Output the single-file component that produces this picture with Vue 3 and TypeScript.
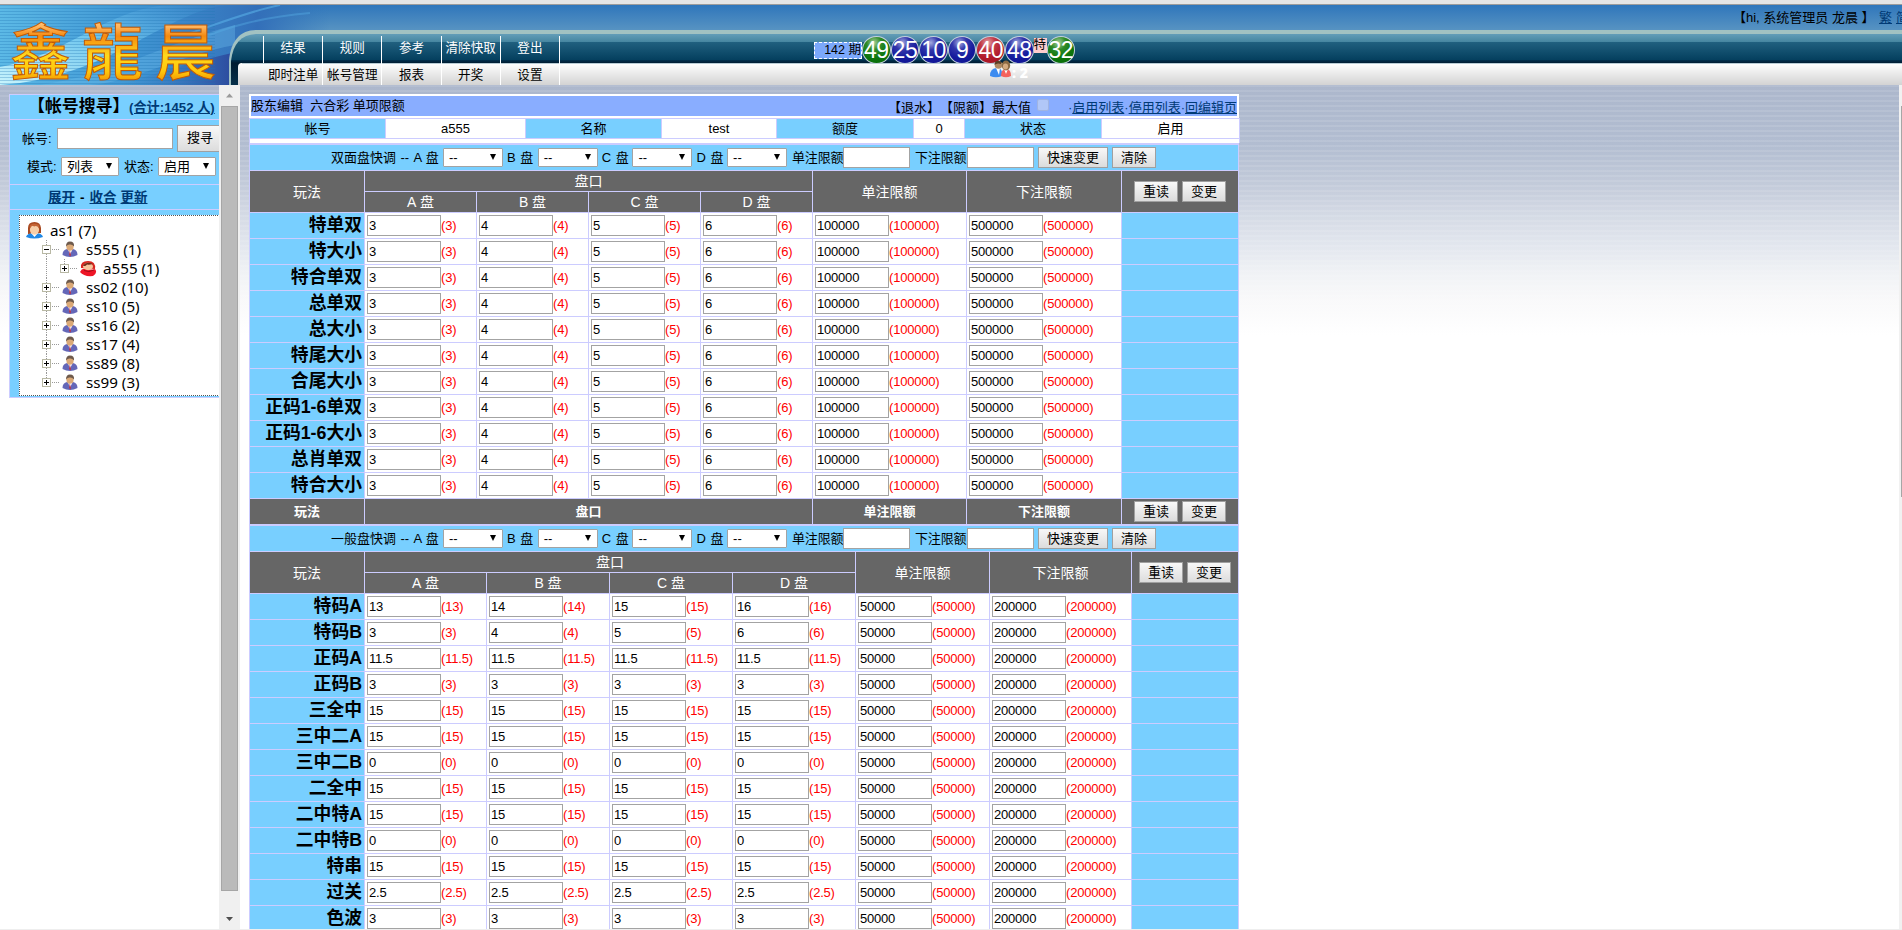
<script setup lang="ts">
interface PlayRow {
  name: string
  rates: string[]
  single: string
  total: string
}
interface PlayTable {
  key: string
  quick: string
  footer: boolean
  rows: PlayRow[]
}
interface TreeNode {
  name: string
  level: number
  icon: 'root' | 'man' | 'red'
  box: '' | 'minus' | 'plus'
}

const topMenu = ['结果', '规则', '参考', '清除快取', '登出']
const subMenu = ['即时注单', '帐号管理', '报表', '开奖', '设置']
const balls = [
  { n: '49', c: 'green' },
  { n: '25', c: 'blue' },
  { n: '10', c: 'blue' },
  { n: '9', c: 'blue' },
  { n: '40', c: 'red' },
  { n: '48', c: 'blue' },
]
const tree: TreeNode[] = [
  { name: 'as1 (7)', level: 0, icon: 'root', box: '' },
  { name: 's555 (1)', level: 1, icon: 'man', box: 'minus' },
  { name: 'a555 (1)', level: 2, icon: 'red', box: 'plus' },
  { name: 'ss02 (10)', level: 1, icon: 'man', box: 'plus' },
  { name: 'ss10 (5)', level: 1, icon: 'man', box: 'plus' },
  { name: 'ss16 (2)', level: 1, icon: 'man', box: 'plus' },
  { name: 'ss17 (4)', level: 1, icon: 'man', box: 'plus' },
  { name: 'ss89 (8)', level: 1, icon: 'man', box: 'plus' },
  { name: 'ss99 (3)', level: 1, icon: 'man', box: 'plus' },
]
const info = [
  { t: '帐号', head: true },
  { t: 'a555', head: false },
  { t: '名称', head: true },
  { t: 'test', head: false },
  { t: '额度', head: true },
  { t: '0', head: false },
  { t: '状态', head: true },
  { t: '启用', head: false },
]

const twoSided = ['特单双', '特大小', '特合单双', '总单双', '总大小', '特尾大小', '合尾大小', '正码1-6单双', '正码1-6大小', '总肖单双', '特合大小']
const general: [string, string[]][] = [
  ['特码A', ['13', '14', '15', '16']],
  ['特码B', ['3', '4', '5', '6']],
  ['正码A', ['11.5', '11.5', '11.5', '11.5']],
  ['正码B', ['3', '3', '3', '3']],
  ['三全中', ['15', '15', '15', '15']],
  ['三中二A', ['15', '15', '15', '15']],
  ['三中二B', ['0', '0', '0', '0']],
  ['二全中', ['15', '15', '15', '15']],
  ['二中特A', ['15', '15', '15', '15']],
  ['二中特B', ['0', '0', '0', '0']],
  ['特串', ['15', '15', '15', '15']],
  ['过关', ['2.5', '2.5', '2.5', '2.5']],
  ['色波', ['3', '3', '3', '3']],
]
const tables: PlayTable[] = [
  {
    key: 'sided',
    quick: '双面盘快调',
    footer: true,
    rows: twoSided.map((name) => ({ name, rates: ['3', '4', '5', '6'], single: '100000', total: '500000' })),
  },
  {
    key: 'general',
    quick: '一般盘快调',
    footer: false,
    rows: general.map(([name, rates]) => ({ name, rates, single: '50000', total: '200000' })),
  },
]
const plates = ['A', 'B', 'C', 'D']
const values = (r: PlayRow): string[] => [...r.rates, r.single, r.total]
</script>

<template>
  <div class="page">
    <div class="chrome"></div>
    <header class="top">
      <svg class="art" width="1902" height="80" viewBox="0 0 1902 80">
        <defs>
          <linearGradient id="skybar" x1="0" y1="0" x2="0" y2="1">
            <stop offset="0" stop-color="#2f76bb" />
            <stop offset="1" stop-color="#5793c2" />
          </linearGradient>
          <linearGradient id="left" x1="0" y1="0" x2="1" y2="0">
            <stop offset="0" stop-color="#5cb9e6" />
            <stop offset=".4" stop-color="#4096d3" />
            <stop offset=".78" stop-color="#336fb9" />
            <stop offset="1" stop-color="#2f74bb" stop-opacity="0" />
          </linearGradient>
          <linearGradient id="wave" x1="0" y1="1" x2="1" y2="0">
            <stop offset="0" stop-color="#c9f5fd" />
            <stop offset=".5" stop-color="#6fc6ee" />
            <stop offset="1" stop-color="#3f8fd2" stop-opacity=".1" />
          </linearGradient>
          <linearGradient id="deep" x1="0" y1="0" x2="1" y2="0">
            <stop offset="0" stop-color="#3c86c9" stop-opacity="0" />
            <stop offset="1" stop-color="#2b4499" />
          </linearGradient>
          <linearGradient id="bar" x1="0" y1="0" x2="0" y2="1">
            <stop offset="0" stop-color="#639db8" />
            <stop offset=".15" stop-color="#4787a1" />
            <stop offset=".16" stop-color="#20607f" />
            <stop offset=".5" stop-color="#05405f" />
            <stop offset=".52" stop-color="#002b48" />
            <stop offset=".57" stop-color="#001b30" />
            <stop offset="1" stop-color="#06304a" />
          </linearGradient>
          <linearGradient id="silver" x1="0" y1="0" x2="0" y2="1">
            <stop offset="0" stop-color="#ffffff" />
            <stop offset="1" stop-color="#d3d3d3" />
          </linearGradient>
          <linearGradient id="gold" x1="0" y1="0" x2="0" y2="1">
            <stop offset="0" stop-color="#fff0dc" />
            <stop offset=".26" stop-color="#ffb45a" />
            <stop offset=".36" stop-color="#f58a10" />
            <stop offset=".58" stop-color="#ffd81c" />
            <stop offset=".76" stop-color="#ffc60a" />
            <stop offset="1" stop-color="#e25e00" />
          </linearGradient>
          <pattern id="lines" width="4" height="3" patternUnits="userSpaceOnUse">
            <rect width="4" height="1" fill="#1f73b4" fill-opacity=".3" />
          </pattern>
        </defs>
        <rect width="1902" height="80" fill="#5c9bc4" />
        <rect width="1902" height="25" fill="url(#skybar)" />
        <rect width="330" height="80" fill="url(#left)" />
        <path d="M120 80 C165 65 190 58 240 46 V80 Z" fill="url(#deep)" />
        <path d="M0 62 C70 50 110 0 175 0 H225 C160 10 110 72 0 80 Z" fill="url(#wave)" />
        <path d="M40 80 C120 68 160 40 235 20 L235 40 C180 50 130 78 90 80 Z" fill="#6fc1ee" fill-opacity=".35" />
        <rect width="215" height="80" fill="url(#lines)" />
        <path d="M185 30 C220 18 250 6 280 0" stroke="#58afe6" stroke-opacity=".6" stroke-width="2" fill="none" />
        <path d="M190 38 C230 20 265 12 310 8" stroke="#58afe6" stroke-opacity=".4" stroke-width="2" fill="none" />
        <path d="M229 80 V55 C231 36 240 25 256 25 H1902 V80 Z" fill="#a2c2c2" />
        <path d="M231 80 V56 C233 38 242 29 258 29 H1902 V80 Z" fill="url(#bar)" />
        <path d="M238 80 V62 Q238 58 242 58 H1902 V80 Z" fill="url(#silver)" />
        <path d="M242 58.500 H1902" stroke="#b8cbd4" stroke-width="1" />
        <g class="logo" fill="url(#gold)" font-size="61">
          <text x="10" y="70">鑫</text>
          <text x="82" y="70">龍</text>
          <text x="155" y="70">晨</text>
        </g>
      </svg>
      <nav class="menus">
        <ul class="menu dark"><li v-for="m in topMenu" :key="m">{{ m }}</li></ul>
        <ul class="menu light"><li v-for="m in subMenu" :key="m">{{ m }}</li></ul>
      </nav>
      <div class="draw">
        <span class="issue">142 期</span>
        <span v-for="b in balls" :key="b.n" class="ball" :class="b.c">{{ b.n }}</span>
        <span class="special">特</span>
        <span class="ball green">32</span>
      </div>
      <div class="online">
        <svg width="22" height="18" viewBox="0 0 22 18">
          <path d="M0 16 Q0 8 7 8 Q13 8 12 16 Q6 18.500 0 16Z" fill="#3d8cf0" />
          <path d="M6 8 L9 15 L10 8Z" fill="#fff" />
          <circle cx="8.500" cy="5" r="3.800" fill="#b08a63" />
          <path d="M4.500 5 Q5 0 9 1 Q12 2 11 4 Q7 2.500 4.500 5Z" fill="#5b3e25" />
          <path d="M11 16 Q11 9 16 9 Q21 9 21 16 Q16 18.500 11 16Z" fill="#f4625c" />
          <path d="M14 9 L16 14 L18 9Z" fill="#fff" />
          <ellipse cx="16" cy="5.500" rx="4.200" ry="5" fill="#8b6b44" />
          <ellipse cx="15.500" cy="6.500" rx="2.600" ry="3" fill="#d5ab80" />
        </svg>
        <b>: 2</b>
      </div>
      <div class="user"><span>【hi, 系统管理员 龙晨 】</span><a>繁</a><a>简</a></div>
    </header>

    <div class="frames">
      <aside class="side">
        <div class="panel">
          <div class="ptitle"><b>【帐号搜寻】</b><a>(合计:1452 人)</a></div>
          <div class="psearch">
            <div class="line one"><span>帐号:</span><i class="field"></i><span class="btn big">搜寻</span></div>
            <div class="line two">
              <span>模式:</span><span class="select">列表<em></em></span>
              <span class="st">状态:</span><span class="select">启用<em></em></span>
            </div>
          </div>
          <div class="pact"><a>展开</a><span>-</span><a>收合</a><a class="last">更新</a></div>
          <div class="ptree">
            <div class="tree">
              <div v-for="n in tree" :key="n.name" class="node" :class="'lv' + n.level">
                <span v-if="n.box" class="toggle">
                  <svg width="19" height="19" viewBox="0 0 19 19">
                    <path v-if="n.name !== 'ss99 (3)' && n.level === 1" d="M5.500 0 V19" stroke="#999" stroke-dasharray="1 1" />
                    <path v-else d="M5.500 0 V9" stroke="#999" stroke-dasharray="1 1" />
                    <path d="M11 9.500 H18" stroke="#999" stroke-dasharray="1 1" />
                    <rect x="1.500" y="5.500" width="8" height="8" fill="#fff" stroke="#b8b8a4" />
                    <path d="M3 9.500 H8" stroke="#000" />
                    <path v-if="n.box === 'plus'" d="M5.500 7 V12" stroke="#000" />
                  </svg>
                </span>
                <svg class="avatar" width="17" height="17" viewBox="0 0 17 17">
                  <g v-if="n.icon === 'man'">
                    <path d="M.500 14 Q.500 9 5 8 H11 Q15.500 9 15.500 14 Q8 18 .500 14Z" fill="#6467b8" />
                    <path d="M6 8.500 L8 13.500 L10.500 8.500Z" fill="#fff" />
                    <path d="M7.800 9 L7 14 L8.300 15.500 L9 14Z" fill="#b8354c" />
                    <ellipse cx="8" cy="5.500" rx="3.600" ry="4.300" fill="#dba977" />
                    <path d="M4 5.500 Q4 .5 8 .5 Q12.500 .5 12 5.500 Q10 3 7.500 3.500 Q5.500 3.500 4 5.500Z" fill="#6e5a4c" />
                  </g>
                  <g v-else-if="n.icon === 'root'">
                    <path d="M2 12 V6 Q2 0 8.500 0 Q14.500 0 15 6 V11Z" fill="#a8481f" />
                    <path d="M0 15 Q1 11 8.500 11 Q16 11 17 15 Q8 18 0 15Z" fill="#1f88e5" />
                    <path d="M5 11 L8.500 15 L12 11Z" fill="#fff" />
                    <ellipse cx="8.500" cy="7.800" rx="4.600" ry="4.900" fill="#f6cfa9" />
                    <path d="M3.800 6.500 Q6 2.500 8 4.500 Q11 3 13.200 6.500 V3 Q8 0 3.800 3Z" fill="#c46434" />
                  </g>
                  <g v-else>
                    <path d="M1 8 Q0 1 8 1 Q16 1 15 9Z" fill="#d8261f" />
                    <path d="M0 12 Q2 8 5 9 Q12 10 15 9 Q18 13 13 16 Q4 17 0 12Z" fill="#ee1525" />
                    <ellipse cx="8" cy="6.500" rx="5" ry="3.700" fill="#f7c49b" />
                    <path d="M3 5.500 Q6 1 13 4 Q9 5 7 4.500 Q5 7 3 5.500Z" fill="#6d2b17" />
                    <path d="M4 10.500 Q9 13 14 10" stroke="#a50d18" fill="none" />
                  </g>
                </svg>
                <span class="nm">{{ n.name }}</span>
              </div>
            </div>
          </div>
        </div>
      </aside>
      <div class="scroll">
        <svg width="21" height="21" viewBox="0 0 21 21"><path d="M7 12.500 L10.500 8.500 L14 12.500Z" fill="#9a9a9a" /></svg>
        <div class="thumb"></div>
        <svg width="21" height="12" viewBox="0 0 21 12"><path d="M7 4 H14 L10.500 8Z" fill="#505050" /></svg>
      </div>

      <main class="main">
        <div class="title">
          <span class="crumb">股东编辑&nbsp; 六合彩 单项限额</span>
          <span class="max">【退水】【限额】最大值</span><i class="check"></i>
          <span class="links"><s>·</s><a>启用列表</a><s>·</s><a>停用列表</a><s>·</s><a>回编辑页</a></span>
        </div>
        <div class="info">
          <div v-for="c in info" :key="c.t" :class="{ head: c.head }">{{ c.t }}</div>
          <div class="spacer"></div>
        </div>

        <section v-for="t in tables" :key="t.key" class="grid" :class="t.key">
          <div class="quick">
            <span class="q0">{{ t.quick }} -- A 盘</span><span class="select"><u>--</u><em></em></span>
            <template v-for="p in plates.slice(1)" :key="p">
              <span class="qp">{{ p }} 盘</span><span class="select"><u>--</u><em></em></span>
            </template>
            <span class="ql">单注限额</span><i class="field"></i>
            <span class="ql second">下注限额</span><i class="field"></i>
            <span class="btn fast">快速变更</span><span class="btn">清除</span>
          </div>
          <div class="h tall">玩法</div>
          <div class="h plates">盘口</div>
          <div class="h tall">单注限额</div>
          <div class="h tall">下注限额</div>
          <div class="h tall acts"><span class="btn">重读</span><span class="btn">变更</span></div>
          <div v-for="p in plates" :key="p" class="h sub"><span>{{ p }}</span>&nbsp;盘</div>
          <template v-for="r in t.rows" :key="r.name">
            <div class="label">{{ r.name }}</div>
            <div v-for="(v, i) in values(r)" :key="i" class="val">
              <i class="field">{{ v }}</i><span>({{ v }})</span>
            </div>
            <div class="blank"></div>
          </template>
          <template v-if="t.footer">
            <div class="h foot">玩法</div>
            <div class="h foot wide">盘口</div>
            <div class="h foot">单注限额</div>
            <div class="h foot">下注限额</div>
            <div class="h acts"><span class="btn">重读</span><span class="btn">变更</span></div>
          </template>
        </section>
      </main>
      <div class="rscroll"><div></div></div>
    </div>
    <div class="bottom"></div>
  </div>
</template>

<style>
html,
body {
  margin: 0;
  overflow: hidden;
  background: #fff;
}
</style>

<style scoped>
.page {
  width: 1902px;
  height: 930px;
  overflow: hidden;
  display: flex;
  flex-direction: column;
  font: 13px/16px 'Liberation Sans', 'Noto Sans CJK SC', sans-serif;
  color: #000;
  white-space: nowrap;
  text-spacing-trim: space-all;
}
.page * {
  box-sizing: border-box;
}
i,
em {
  font-style: normal;
}
u,
s {
  text-decoration: none;
}
.chrome {
  flex: none;
  height: 5px;
  background: #e5e5e5;
  border-bottom: 1px solid #9b9b9b;
}
.top {
  flex: none;
  height: 80px;
  position: relative;
}
.art {
  display: block;
}
.logo {
  font-family: 'Noto Sans CJK TC', 'Noto Sans CJK SC', sans-serif;
  font-weight: 500;
  stroke: #c25a06;
  stroke-width: 1px;
}
.menus {
  position: absolute;
  left: 263px;
  top: 31px;
}
.menu {
  list-style: none;
  margin: 0;
  padding: 0;
  display: flex;
  border-right: 1px solid #fff;
  width: 297px;
}
.menu li {
  flex: 1 1 0;
  text-align: center;
  border-left: 1px solid #fff;
  font-size: 12.6px;
}
.dark li {
  height: 27px;
  line-height: 25px;
  color: #fff;
}
.light li {
  height: 22px;
  line-height: 25px;
}
.light li:first-child {
  border-left-color: transparent;
}
.draw {
  position: absolute;
  left: 814px;
  top: 31px;
  height: 28px;
  display: flex;
  align-items: center;
}
.issue {
  width: 48px;
  height: 17px;
  margin-top: 1px;
  line-height: 15px;
  background: #7ba8fb;
  border: 1px dashed #fff;
  text-align: right;
  font-size: 12.5px;
}
.ball {
  width: 28.600px;
  height: 28px;
  border-radius: 50%;
  border: 1px solid #c3cfdb;
  color: #fff;
  font-size: 23px;
  line-height: 27px;
  display: flex;
  justify-content: center;
  letter-spacing: -0.5px;
}
.green {
  background: radial-gradient(circle at 40% 22%, #a5d09b 0, #2f8a28 28%, #0c750c 60%, #086708 100%);
}
.blue {
  background: radial-gradient(circle at 40% 22%, #a3aae0 0, #3237ab 28%, #141a9c 60%, #101590 100%);
}
.red {
  background: radial-gradient(circle at 40% 22%, #e5a3aa 0, #c13a47 28%, #b01a2a 60%, #a01424 100%);
}
.special {
  width: 13px;
  height: 15px;
  margin: -9px 0 0 0;
  background: #fcc;
  line-height: 14px;
  font-size: 12.5px;
}
.online {
  position: absolute;
  left: 990px;
  top: 55px;
  display: flex;
  color: #fff;
  font: bold 14px/26px 'Open Sans', sans-serif;
}
.user {
  position: absolute;
  left: 1733px;
  top: 5px;
  font-size: 13px;
  display: flex;
}
.user span {
  width: 146px;
}
.user a {
  width: 17px;
}
.user a,
.ptitle a,
.pact a,
.links a {
  color: #003a75;
  text-decoration: underline;
}
.frames {
  height: 844px;
  display: flex;
  overflow: hidden;
  background:
    repeating-linear-gradient(180deg, rgba(255, 255, 255, 0.1) 0 2px, rgba(255, 255, 255, 0) 2px 5px),
    linear-gradient(180deg, #acb7cc 0, #b2bdd1 60px, #c3cbda 100px, #d3d9e4 128px, #e2e6ee 160px, #f0f2f5 188px, #f9f9fa 215px, #fff 250px);
}
.side {
  width: 219px;
  padding: 9px 0 0 9px;
  overflow: hidden;
}
.panel {
  width: 240px;
  height: 304px;
  background: #ccf;
  padding: 1px;
  display: grid;
  grid-template-rows: 24px 64px 24px 187px;
  gap: 1px;
}
.panel > div {
  background: #78cfff;
}
.ptitle {
  display: flex;
  align-items: center;
}
.ptitle b {
  font-size: 16.900px;
  margin: -1px 0 0 18px;
  width: 101px;
}
.ptitle a {
  font-size: 13.200px;
  font-weight: bold;
  margin: 2px 0 0 0;
}
.psearch {
  padding-top: 5px;
}
.line {
  display: flex;
  align-items: center;
}
.one {
  padding-left: 12px;
  height: 27px;
}
.one > span:first-child {
  width: 35px;
}
.one .field {
  width: 116px;
  margin-right: 4px;
}
.two {
  padding-left: 17px;
  height: 29px;
}
.two > span:first-child {
  width: 34px;
}
.two .select {
  width: 58px;
}
.two .st {
  width: 34px;
  margin-left: 5px;
}
.field {
  display: block;
  flex: none;
  height: 21px;
  width: 67px;
  background: #fff;
  border: 1px solid #a3a3a3;
}
.btn {
  flex: none;
  display: block;
  height: 21px;
  width: 44px;
  line-height: 19px;
  text-align: center;
  background: linear-gradient(180deg, #f8f8f8, #dcdcdc);
  border: 1px solid #a0a0a0;
  color: #000;
  font-size: 13px;
}
.btn.big {
  height: 27px;
  width: 60px;
  padding-left: 9px;
  text-align: left;
  line-height: 24px;
}
.select {
  flex: none;
  display: flex;
  align-items: center;
  justify-content: space-between;
  width: 60px;
  height: 19px;
  padding: 0 6px 0 5px;
  background: #fff;
  border: 1px solid #a3a3a3;
  border-radius: 1px;
}
.select em {
  width: 0;
  height: 0;
  margin-top: -2px;
  border: 3.500px solid transparent;
  border-top: 6px solid #000;
  border-bottom: 0;
}
.pact {
  padding: 1px 0 0 38px;
  display: flex;
  align-items: center;
  font-size: 13.500px;
  font-weight: bold;
}
.pact span {
  margin: 0 5px;
}
.pact .last {
  margin-left: 4px;
}
.ptree {
  padding: 5px 0 0 9px;
}
.tree {
  height: 181px;
  background: #fff;
  border: 1px dotted #555;
  padding-top: 5px;
}
.node {
  height: 19px;
  display: flex;
  align-items: center;
  font: 15.200px/19px 'Noto Sans', 'Open Sans', sans-serif;
}
.toggle {
  height: 19px;
  width: 20px;
}
.toggle svg,
.avatar {
  display: block;
}
.lv0 {
  padding-left: 6px;
}
.lv0 .nm {
  margin-left: 7px;
}
.lv1 {
  padding-left: 21px;
}
.lv1 .nm {
  margin-left: 7px;
}
.lv1 .avatar,
.lv2 .avatar {
  margin-left: 1px;
}
.lv2 {
  padding-left: 39px;
  background: repeating-linear-gradient(180deg, #999 0 1px, #fff 1px 2px) 26px 0 / 1px 19px no-repeat;
}
.lv2 .nm {
  margin-left: 6px;
}
.scroll {
  width: 21px;
  background: #f0f0f0;
  display: flex;
  flex-direction: column;
}
.scroll svg {
  flex: none;
}
.scroll .thumb {
  flex: none;
  height: 785px;
  width: 17px;
  margin: 0 2px;
  background: #bababa;
  border: 1px solid #a6a6a6;
}
.scroll svg:last-child {
  margin-top: 22px;
}
.main {
  width: 1659px;
  padding: 9px 0 0 9px;
}
.rscroll {
  width: 3px;
  background: #f1f1f1;
  padding: 21px 0 0 2px;
}
.rscroll div {
  height: 391px;
  background: #a6a6a6;
}
.title {
  width: 990px;
  height: 24px;
  border: 2px solid #fff;
  background: #89adff;
  display: flex;
  line-height: 19px;
}
.crumb {
  width: 637px;
}
.max {
  width: 145px;
  padding-top: 2px;
  height: 20px;
}
.check {
  width: 12px;
  height: 12px;
  margin: 3px 0 0 4px;
  border: 1px solid #a0b4e2;
  border-radius: 2px;
  background: #b1c7f7;
}
.links {
  margin-left: auto;
  padding-top: 2px;
  height: 20px;
}
.links s {
  color: #003a75;
}
.info {
  width: 991px;
  padding: 1px 1px 0;
  background: #ccf;
  display: grid;
  grid-template: 19px 4px / 135px 139px 135px 114px 136px 50px 136px 137px;
  gap: 1px;
}
.info div {
  background: #fff;
  text-align: center;
  line-height: 19px;
}
.info .head {
  background: #78cfff;
}
.info .spacer {
  grid-column: 1 / -1;
}
.grid {
  width: 990px;
  padding: 2px 1px 0;
  background: #ccf;
  display: grid;
  gap: 1px;
  grid-template-rows: 25px 20px 20px;
  grid-auto-rows: 25px;
}
.sided {
  grid-template-columns: 114px repeat(4, 111px) 153px 154px 116px;
}
.general {
  grid-template-columns: 114px 121px repeat(3, 122px) 133px 141px 106px;
}
.quick {
  grid-column: 1 / -1;
  background: #78cfff;
  display: flex;
  align-items: center;
  padding-left: 81px;
}
.q0 {
  width: 112px;
  word-spacing: 0.8px;
}
.qp {
  width: 34.700px;
  padding-left: 4px;
  word-spacing: 1px;
}
.ql {
  width: 56px;
  padding-left: 5px;
  letter-spacing: -0.2px;
}
.ql.second {
  width: 57px;
}
.quick .fast {
  width: 70px;
  margin: 0 4px;
}
.h {
  background: #666;
  color: #fff;
  font-size: 14px;
  display: flex;
  align-items: center;
  justify-content: center;
}
.tall {
  grid-row: 2 / 4;
}
.plates {
  grid-column: 2 / 6;
  grid-row: 2;
}
.sub {
  grid-row: 3;
}
.foot {
  font-size: 13px;
  font-weight: bold;
}
.wide {
  grid-column: 2 / 6;
}
.acts {
  gap: 4px;
}
.label {
  background: #78cfff;
  text-align: right;
  padding-right: 2px;
  font-size: 17.800px;
  font-weight: bold;
  line-height: 24px;
}
.val {
  background: #fff;
  display: flex;
  align-items: center;
  padding-left: 2px;
}
.val .field {
  width: 74px;
  padding-left: 1px;
  line-height: 19px;
  letter-spacing: -0.2px;
}
.val span {
  color: #f00;
  letter-spacing: -0.2px;
}
.blank {
  background: #78cfff;
}
.bottom {
  height: 1px;
  background: #eee;
}
</style>
